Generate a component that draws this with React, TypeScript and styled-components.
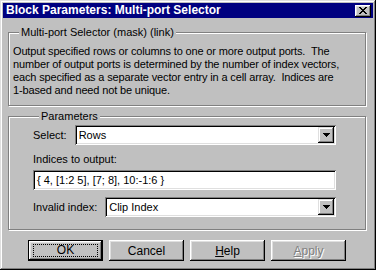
import React from "react";
import styled, { createGlobalStyle } from "styled-components";

const GlobalStyle = createGlobalStyle`
  html, body {
    margin: 0;
    padding: 0;
    background: #c0c0c0;
  }
  body {
    font-family: "Liberation Sans", Arial, sans-serif;
    font-size: 11px;
    color: #000;
  }
`;

const Window = styled.div`
  box-sizing: border-box;
  width: 376px;
  height: 270px;
  padding: 3px;
  background: #c0c0c0;
  box-shadow: inset -1px -1px #000, inset 1px 1px #dfdfdf,
    inset -2px -2px #808080, inset 2px 2px #fff;
  display: flex;
  flex-direction: column;
`;

const TitleBar = styled.div`
  height: 15px;
  background: #000080;
  color: #fff;
  display: flex;
  align-items: center;
  justify-content: space-between;
  padding: 0 2px 0 3px;
  font-weight: bold;
  font-size: 12px;
  line-height: 15px;
  white-space: nowrap;
`;

const CloseButton = styled.div`
  box-sizing: border-box;
  width: 16px;
  height: 12px;
  background: #c0c0c0;
  box-shadow: inset -1px -1px #000, inset 1px 1px #fff,
    inset -2px -2px #808080, inset 2px 2px #dfdfdf;
  display: flex;
  align-items: center;
  justify-content: center;
`;

const Body = styled.div`
  display: flex;
  flex-direction: column;
  padding: 7px 7px 0 5px;
`;

const Group = styled.fieldset<{ $gap?: number }>`
  margin: ${(p) => p.$gap || 0}px 0 0 0;
  border: 1px solid #808080;
  box-shadow: inset 1px 1px #fff, 1px 1px #fff;
  min-width: 0;
  display: flex;
  flex-direction: column;
`;

const Legend = styled.legend`
  padding: 0 2px;
  margin-left: 6px;
  line-height: 14px;
  background: #c0c0c0;
`;

const Description = styled(Group)`
  padding: 6px 4px 8px 4px;
`;

const Params = styled(Group)`
  padding: 2px 29px 12px 24px;
`;

const DescText = styled.div`
  line-height: 13px;
  letter-spacing: -0.15px;
  white-space: nowrap;
`;

const Row = styled.div<{ $top?: number }>`
  display: flex;
  align-items: center;
  gap: 8px;
  margin-top: ${(p) => p.$top || 0}px;
`;

const Label = styled.div<{ $top?: number }>`
  line-height: 14px;
  margin-top: ${(p) => p.$top || 0}px;
  white-space: nowrap;
`;

const Sunken = styled.div<{ $top?: number }>`
  box-sizing: border-box;
  height: 20px;
  flex: 1;
  background: #fff;
  box-shadow: inset 1px 1px #808080, inset -1px -1px #fff,
    inset 2px 2px #000, inset -2px -2px #dfdfdf;
  padding: 2px 2px 2px 4px;
  display: flex;
  align-items: center;
  margin-top: ${(p) => p.$top || 0}px;
  white-space: nowrap;
`;

const ComboText = styled.div`
  flex: 1;
  line-height: 16px;
`;

const DropButton = styled.div`
  box-sizing: border-box;
  width: 16px;
  height: 16px;
  background: #c0c0c0;
  box-shadow: inset -1px -1px #000, inset 1px 1px #dfdfdf,
    inset -2px -2px #808080, inset 2px 2px #fff;
  display: flex;
  align-items: center;
  justify-content: center;
`;

const ButtonRow = styled.div`
  display: flex;
  justify-content: center;
  gap: 6px;
  margin-top: 10px;
`;

const Button = styled.div<{ $default?: boolean; $disabled?: boolean }>`
  box-sizing: border-box;
  width: 75px;
  height: 21px;
  background: #c0c0c0;
  display: flex;
  align-items: center;
  justify-content: center;
  font-size: 12px;
  color: ${(p) => (p.$disabled ? "#808080" : "#000")};
  text-shadow: ${(p) => (p.$disabled ? "1px 1px #fff" : "none")};
  box-shadow: ${(p) =>
    p.$default
      ? "inset 0 0 0 1px #000, inset -2px -2px #000, inset 2px 2px #fff, inset -3px -3px #808080, inset 3px 3px #dfdfdf"
      : "inset -1px -1px #000, inset 1px 1px #fff, inset -2px -2px #808080, inset 2px 2px #dfdfdf"};
`;

const Focus = styled.div`
  box-sizing: border-box;
  width: 65px;
  height: 13px;
  border: 1px dotted #000;
  display: flex;
  align-items: center;
  justify-content: center;
  line-height: 11px;
`;

const Key = styled.span`
  text-decoration: underline;
`;

function DownArrow() {
  return (
    <svg width="7" height="4" viewBox="0 0 7 4">
      <path d="M0 0h7v1h-1v1h-1v1h-1v1h-1v-1h-1v-1h-1v-1h-1z" fill="#000" />
    </svg>
  );
}

function Combo({ value }: { value: string }) {
  return (
    <Sunken>
      <ComboText>{value}</ComboText>
      <DropButton>
        <DownArrow />
      </DropButton>
    </Sunken>
  );
}

export default function App() {
  return (
    <>
      <GlobalStyle />
      <Window>
        <TitleBar>
          <span>Block Parameters: Multi-port Selector</span>
          <CloseButton>
            <svg width="8" height="7" viewBox="0 0 8 7">
              <path
                d="M0 0h2v1h1v1h2v-1h1v-1h2v1h-1v1h-1v1h-1v1h1v1h1v1h1v1h-2v-1h-1v-1h-2v1h-1v1h-2v-1h1v-1h1v-1h1v-1h-1v-1h-1v-1h-1z"
                fill="#000"
              />
            </svg>
          </CloseButton>
        </TitleBar>
        <Body>
          <Description>
            <Legend>Multi-port Selector (mask) (link)</Legend>
            <DescText>
              Output specified rows or columns to one or more output ports.&nbsp; The
              <br />
              number of output ports is determined by the number of index vectors,
              <br />
              each specified as a separate vector entry in a cell array.&nbsp; Indices are
              <br />
              1-based and need not be unique.
            </DescText>
          </Description>
          <Params $gap={3}>
            <Legend>Parameters</Legend>
            <Row>
              <Label>Select:</Label>
              <Combo value="Rows" />
            </Row>
            <Label $top={7}>Indices to output:</Label>
            <Row $top={4}>
              <Sunken>{"{ 4, [1:2 5], [7; 8], 10:-1:6 }"}</Sunken>
            </Row>
            <Row $top={7}>
              <Label>Invalid index:</Label>
              <Combo value="Clip Index" />
            </Row>
          </Params>
          <ButtonRow>
            <Button $default>
              <Focus>OK</Focus>
            </Button>
            <Button>Cancel</Button>
            <Button>
              <span>
                <Key>H</Key>elp
              </span>
            </Button>
            <Button $disabled>
              <span>
                <Key>A</Key>pply
              </span>
            </Button>
          </ButtonRow>
        </Body>
      </Window>
    </>
  );
}
